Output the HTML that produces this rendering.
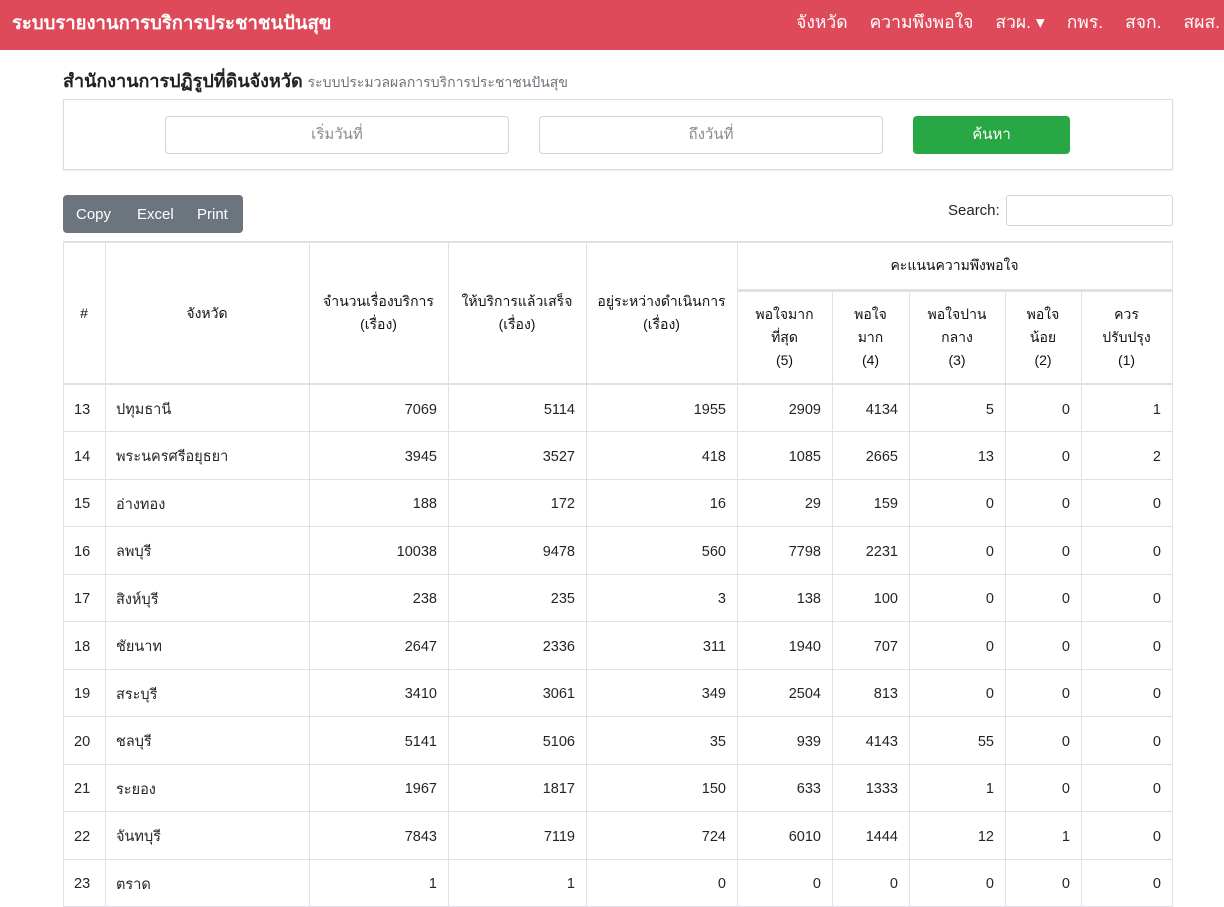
<!DOCTYPE html>
<html><head><meta charset="utf-8">
<style>
*{box-sizing:border-box;margin:0;padding:0}
body{width:1224px;height:864px;overflow:hidden;background:#fff;font-family:"Liberation Sans","DejaVu Sans",sans-serif;color:#212529;font-size:15px;position:relative}
.nav{position:absolute;left:0;top:0;width:1224px;height:50px;background:#df4a5a;color:#fff}
.brand{position:absolute;left:12px;top:9px;font-size:18.5px;font-weight:bold}
.links{position:absolute;right:4px;top:8px;font-size:17.5px;white-space:nowrap}
.links span{margin-left:22px}
.title{position:absolute;left:63px;top:66px;font-size:18px;font-weight:bold;color:#222}
.title small{font-size:14px;font-weight:normal;color:#6c757d}
.card{position:absolute;left:63px;top:99px;width:1110px;height:71px;border:1px solid #dcdcdc;box-shadow:0 1px 2px rgba(0,0,0,.08)}
.inp{position:absolute;top:116px;height:38px;border:1px solid #ced4da;border-radius:4px;color:#8a8a8a;text-align:center;line-height:36px;font-size:15px}
.btn{position:absolute;left:913px;top:116px;width:157px;height:38px;background:#28a745;border-radius:4px;color:#fff;text-align:center;line-height:38px}
.bg{position:absolute;left:63px;top:195px;width:180px;height:38px;background:#6c757d;border-radius:4px;color:#fff;font-size:15px;line-height:40px}
.bg span{position:absolute}
.srch{position:absolute;left:948px;top:202px;font-size:15px}
.sbox{position:absolute;left:1006px;top:195px;width:167px;height:31px;border:1px solid #ced4da;border-radius:3px}
table{position:absolute;left:63px;top:241px;border-collapse:collapse;font-size:14.5px}
td,th{border:1px solid #dee2e6;height:47.5px;padding:0 11px 0 10px}
th{font-weight:normal;text-align:center;font-size:14px;line-height:23px;color:#111}
thead{border-bottom:2px solid #dee2e6}
td{text-align:right;padding-top:3px}
td.l{text-align:left}
table{border-top:2px solid #dee2e6}
</style></head><body>
<div class="nav"><div class="brand">ระบบรายงานการบริการประชาชนปันสุข</div>
<div class="links"><span>จังหวัด</span><span>ความพึงพอใจ</span><span>สวผ. ▾</span><span>กพร.</span><span>สจก.</span><span>สผส.</span></div></div>
<div class="title">สำนักงานการปฏิรูปที่ดินจังหวัด <small>ระบบประมวลผลการบริการประชาชนปันสุข</small></div>
<div class="card"></div>
<div class="inp" style="left:165px;width:344px">เริ่มวันที่</div>
<div class="inp" style="left:539px;width:344px">ถึงวันที่</div>
<div class="btn">ค้นหา</div>
<div class="bg"><span style="left:13px">Copy</span><span style="left:74px">Excel</span><span style="left:134px">Print</span></div>
<div class="srch">Search:</div><div class="sbox"></div>
<table>
<colgroup><col style="width:42px"><col style="width:204px"><col style="width:139px"><col style="width:138px"><col style="width:151px"><col style="width:95px"><col style="width:77px"><col style="width:96px"><col style="width:76px"><col style="width:91px"></colgroup>
<thead>
<tr><th rowspan="2">#</th><th rowspan="2">จังหวัด</th><th rowspan="2">จำนวนเรื่องบริการ<br>(เรื่อง)</th><th rowspan="2">ให้บริการแล้วเสร็จ<br>(เรื่อง)</th><th rowspan="2">อยู่ระหว่างดำเนินการ<br>(เรื่อง)</th><th colspan="5" style="height:48px;border-bottom:3px solid #dee2e6">คะแนนความพึงพอใจ</th></tr>
<tr style="height:94px"><th>พอใจมาก<br>ที่สุด<br>(5)</th><th>พอใจ<br>มาก<br>(4)</th><th>พอใจปาน<br>กลาง<br>(3)</th><th>พอใจ<br>น้อย<br>(2)</th><th>ควร<br>ปรับปรุง<br>(1)</th></tr>
</thead>
<tbody>
<tr><td class="l">13</td><td class="l">ปทุมธานี</td><td>7069</td><td>5114</td><td>1955</td><td>2909</td><td>4134</td><td>5</td><td>0</td><td>1</td></tr>
<tr><td class="l">14</td><td class="l">พระนครศรีอยุธยา</td><td>3945</td><td>3527</td><td>418</td><td>1085</td><td>2665</td><td>13</td><td>0</td><td>2</td></tr>
<tr><td class="l">15</td><td class="l">อ่างทอง</td><td>188</td><td>172</td><td>16</td><td>29</td><td>159</td><td>0</td><td>0</td><td>0</td></tr>
<tr><td class="l">16</td><td class="l">ลพบุรี</td><td>10038</td><td>9478</td><td>560</td><td>7798</td><td>2231</td><td>0</td><td>0</td><td>0</td></tr>
<tr><td class="l">17</td><td class="l">สิงห์บุรี</td><td>238</td><td>235</td><td>3</td><td>138</td><td>100</td><td>0</td><td>0</td><td>0</td></tr>
<tr><td class="l">18</td><td class="l">ชัยนาท</td><td>2647</td><td>2336</td><td>311</td><td>1940</td><td>707</td><td>0</td><td>0</td><td>0</td></tr>
<tr><td class="l">19</td><td class="l">สระบุรี</td><td>3410</td><td>3061</td><td>349</td><td>2504</td><td>813</td><td>0</td><td>0</td><td>0</td></tr>
<tr><td class="l">20</td><td class="l">ชลบุรี</td><td>5141</td><td>5106</td><td>35</td><td>939</td><td>4143</td><td>55</td><td>0</td><td>0</td></tr>
<tr><td class="l">21</td><td class="l">ระยอง</td><td>1967</td><td>1817</td><td>150</td><td>633</td><td>1333</td><td>1</td><td>0</td><td>0</td></tr>
<tr><td class="l">22</td><td class="l">จันทบุรี</td><td>7843</td><td>7119</td><td>724</td><td>6010</td><td>1444</td><td>12</td><td>1</td><td>0</td></tr>
<tr><td class="l">23</td><td class="l">ตราด</td><td>1</td><td>1</td><td>0</td><td>0</td><td>0</td><td>0</td><td>0</td><td>0</td></tr>
</tbody></table>
</body></html>
